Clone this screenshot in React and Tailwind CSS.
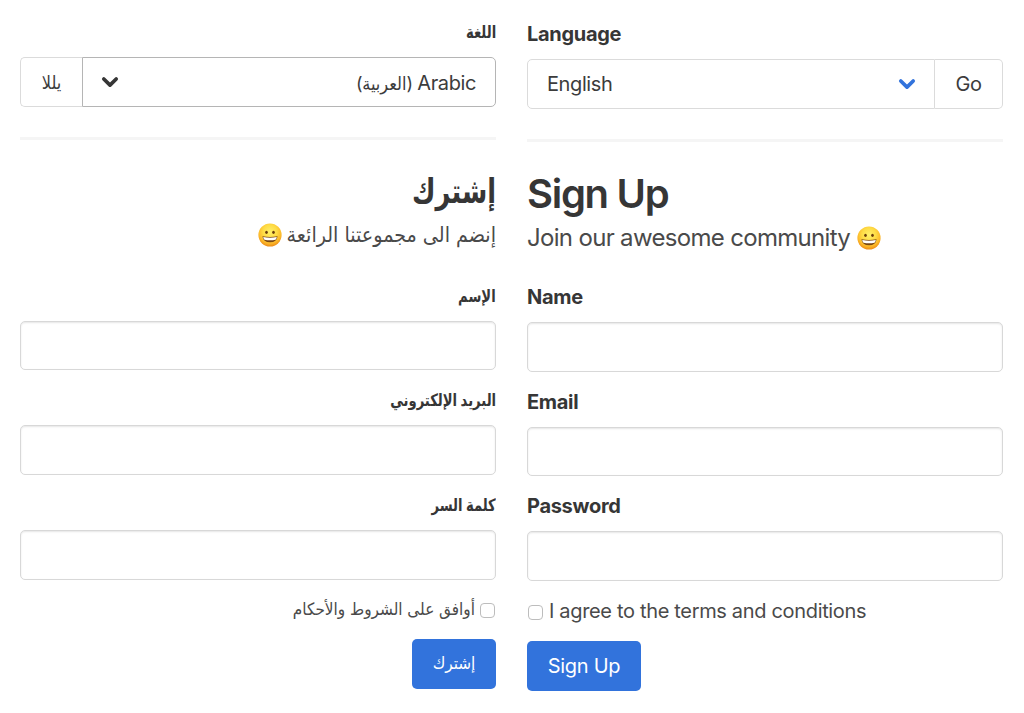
import { useId, useState } from 'react'

const EN = {
  dir: 'ltr',
  language: 'Language',
  option: 'English',
  go: 'Go',
  title: 'Sign Up',
  sub: 'Join our awesome community',
  fields: ['Name', 'Email', 'Password'],
  agree: 'I agree to the terms and conditions',
  submit: 'Sign Up',
}

const AR = {
  dir: 'rtl',
  language: 'اللغة',
  option: 'Arabic',
  optionNative: '(العربية)',
  go: 'يللا',
  title: 'إشترك',
  sub: 'إنضم الى مجموعتنا الرائعة',
  fields: ['الإسم', 'البريد الإلكتروني', 'كلمة السر'],
  agree: 'أوافق على الشروط والأحكام',
  submit: 'إشترك',
}

function Chevron({ className }) {
  return (
    <svg viewBox="0 0 18 12" className={`w-[18px] h-3 shrink-0 ${className}`} fill="none" stroke="currentColor" strokeWidth="3.7" strokeLinecap="round" strokeLinejoin="round">
      <path d="M2.8 3 L9 9.1 L15.2 3" />
    </svg>
  )
}

function Smiley() {
  const id = useId()
  return (
    <svg viewBox="0 0 24 24" className="w-6 h-6 shrink-0">
      <defs>
        <radialGradient id={id} cx="50%" cy="36%" r="66%">
          <stop offset="0" stopColor="#fff06a" />
          <stop offset="0.45" stopColor="#fedc45" />
          <stop offset="0.75" stopColor="#fcb92a" />
          <stop offset="1" stopColor="#ea8412" />
        </radialGradient>
      </defs>
      <circle cx="12" cy="12" r="11.6" fill={`url(#${id})`} />
      <ellipse cx="8.5" cy="9.3" rx="1.3" ry="1.6" fill="#6b3d0c" />
      <ellipse cx="15.5" cy="9.3" rx="1.3" ry="1.6" fill="#6b3d0c" />
      <path d="M4.4 13.2 Q12 14.8 19.6 13.2 Q18.8 19.3 12 19.3 Q5.2 19.3 4.4 13.2Z" fill="#7a4612" />
      <path d="M5.2 14 Q12 15.4 18.8 14 Q18.4 16.4 17.4 16.8 Q12 17.8 6.6 16.8 Q5.6 16.4 5.2 14Z" fill="#fff" />
    </svg>
  )
}

function Label({ rtl, children }) {
  return (
    <span className="block h-[30px] mb-[10px] font-bold text-[#363636] leading-[30px]">
      <span className={rtl ? 'inline-block origin-right scale-x-[0.86] text-[17px] leading-[29px]' : 'inline-block text-[20px] leading-[31px] tracking-[-0.3px]'}>{children}</span>
    </span>
  )
}

function Field({ label, rtl }) {
  return (
    <label className="block mb-[15px]">
      <Label rtl={rtl}>{label}</Label>
      <input className="block w-full h-[49.7px] px-5 rounded-[5px] border border-[#d8d8d8] bg-white shadow-[inset_0_1px_2px_rgba(10,10,10,0.1)] outline-none" />
    </label>
  )
}

function SignUpForm({ t }) {
  const [agreed, setAgreed] = useState(false)
  const rtl = t.dir === 'rtl'

  return (
    <form
      dir={t.dir}
      onSubmit={(e) => e.preventDefault()}
      className={`w-[476px] ${rtl ? 'pt-[17px]' : 'pt-[18.5px]'}`}
    >
      <Label rtl={rtl}>{t.language}</Label>
      <div className="flex h-[50px] text-[#3c3c3c]">
        <button type="button" className={`flex-1 flex items-center justify-between ps-[19px] border rounded-s-[5px] ${rtl ? 'pe-[18px] border-[#b5b5b5]' : 'pe-[18px] border-[#dbdbdb]'}`}>
          <span className="pt-px text-[20px] tracking-[-0.4px]">
            {t.option}
            {t.optionNative && <bdi className="text-[18px]"> {t.optionNative}</bdi>}
          </span>
          <Chevron className={rtl ? 'text-[#363636]' : 'text-[#3273dc]'} />
        </button>
        <button type="button" className={`border border-s-0 border-[#dbdbdb] rounded-e-[5px] ${rtl ? 'w-[62px] text-[18px]' : 'w-[68px] text-[20px] tracking-[-0.4px]'}`}>{t.go}</button>
      </div>

      <hr className="h-[3px] mt-[30px] mb-[29.5px] border-0 bg-[#f5f5f5]" />

      <h1 className={`h-[45px] font-semibold text-[#363636] ${rtl ? 'text-[34px] leading-[42px]' : 'text-[40px] leading-[46px] tracking-[-1.3px]'}`}>
        <span className={rtl ? 'inline-block origin-right scale-x-[0.84]' : ''}>{t.title}</span>
      </h1>
      <p className={`flex items-center h-[40px] mb-[26px] text-[#4a4a4a] ${rtl ? 'gap-[5px] text-[21.3px]' : 'gap-[7px] pt-[3px] text-[24px] tracking-[-0.68px]'}`}>
        <span className="whitespace-nowrap">{t.sub}</span>
        <Smiley />
      </p>

      {t.fields.map((label) => (
        <Field key={label} label={label} rtl={rtl} />
      ))}

      <label className="flex items-center gap-1.5 h-[30px] mb-[14.5px] text-[#4a4a4a]">
        <input
          type="checkbox"
          checked={agreed}
          onChange={(e) => setAgreed(e.target.checked)}
          className="appearance-none w-[15px] h-[15px] mt-0.5 ms-px -me-px rounded-[4px] border border-[#bdbdbd] bg-white checked:bg-[#3273dc]"
        />
        <span className={`whitespace-nowrap ${rtl ? 'text-[17px]' : 'ps-px text-[20px] tracking-[-0.33px]'}`}>{t.agree}</span>
      </label>
      <button type="submit" className={`block h-[50px] rounded-[5px] bg-[#3273dc] text-white ${rtl ? 'w-[84px] text-[17px]' : 'w-[114px] text-[20px] tracking-[-0.3px]'}`}>{t.submit}</button>
    </form>
  )
}

export default function App() {
  return (
    <div className="flex gap-[31px] w-[1024px] h-[713px] ps-5 overflow-hidden bg-white font-['Inter','DejaVu_Sans_Condensed','DejaVu_Sans',sans-serif]">
      <SignUpForm t={AR} />
      <SignUpForm t={EN} />
    </div>
  )
}
